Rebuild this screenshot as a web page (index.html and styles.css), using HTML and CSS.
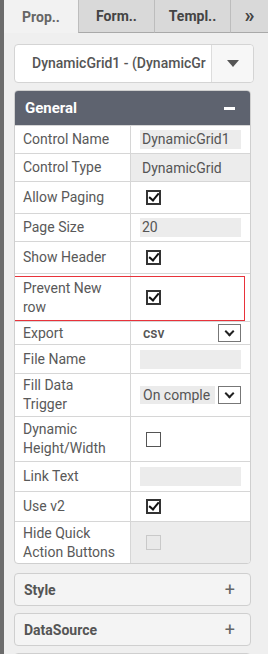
FILE: index.html
```html
<!DOCTYPE html>
<html lang="en">
<head>
  <meta charset="UTF-8">
  <title>Properties</title>
  <link rel="stylesheet" href="styles.css">
</head>
<body>
  <div class="shell">
    <div class="rail"></div>
    <div class="pane">
      <div class="tabs">
        <div class="tab active">Prop..</div>
        <div class="tab">Form..</div>
        <div class="tab">Templ..</div>
        <div class="tab more">&raquo;</div>
      </div>

      <div class="content">
        <div class="picker">
          <span class="picker-text">DynamicGrid1 - (DynamicGr</span>
          <span class="picker-btn">
            <svg width="12" height="7" viewBox="0 0 12 7"><path d="M0 0h12L6 7z" fill="#555"/></svg>
          </span>
        </div>

        <div class="section open">
          <div class="section-head">
            <span>General</span>
            <span class="minus"></span>
          </div>

          <div class="row h28">
            <div class="lbl">Control Name</div>
            <div class="val"><span class="field">DynamicGrid1</span></div>
          </div>
          <div class="row h28">
            <div class="lbl">Control Type</div>
            <div class="val grey">DynamicGrid</div>
          </div>
          <div class="row h32">
            <div class="lbl">Allow Paging</div>
            <div class="val"><span class="check on"></span></div>
          </div>
          <div class="row h28">
            <div class="lbl">Page Size</div>
            <div class="val"><span class="field">20</span></div>
          </div>
          <div class="row h32">
            <div class="lbl">Show Header</div>
            <div class="val"><span class="check on"></span></div>
          </div>
          <div class="row h48 marked">
            <div class="lbl">Prevent New<br>row</div>
            <div class="val"><span class="check on"></span></div>
          </div>
          <div class="row h23">
            <div class="lbl">Export</div>
            <div class="val"><span class="select plain">csv</span><span class="arrow"></span></div>
          </div>
          <div class="row h29">
            <div class="lbl">File Name</div>
            <div class="val"><span class="field"></span></div>
          </div>
          <div class="row h43">
            <div class="lbl">Fill Data<br>Trigger</div>
            <div class="val"><span class="select">On comple</span><span class="arrow"></span></div>
          </div>
          <div class="row h45">
            <div class="lbl">Dynamic<br>Height/Width</div>
            <div class="val"><span class="check"></span></div>
          </div>
          <div class="row h30">
            <div class="lbl">Link Text</div>
            <div class="val"><span class="field"></span></div>
          </div>
          <div class="row h30">
            <div class="lbl">Use v2</div>
            <div class="val"><span class="check on"></span></div>
          </div>
          <div class="row h43 last">
            <div class="lbl">Hide Quick<br>Action Buttons</div>
            <div class="val grey"><span class="check off"></span></div>
          </div>
        </div>

        <div class="section closed">
          <span>Style</span>
          <span class="plus">+</span>
        </div>
        <div class="section closed">
          <span>DataSource</span>
          <span class="plus">+</span>
        </div>
        <div class="section closed"></div>
      </div>
    </div>
  </div>
</body>
</html>
```

FILE: styles.css
```css
body {
  margin: 0;
  font-family: Roboto, "Liberation Sans", sans-serif;
  background: #efefef;
  color: #555;
  width: 268px;
  height: 654px;
  overflow: hidden;
}

.shell {
  display: flex;
  height: 654px;
}

.rail {
  width: 4px;
  background: #6c6c6c;
  flex-shrink: 0;
}

.pane {
  flex: 1;
  min-width: 0;
}

.tabs {
  display: flex;
  height: 33px;
}

.tab {
  display: flex;
  align-items: center;
  justify-content: center;
  width: 76px;
  background: #d9d9d9;
  border-left: 1px solid #bdbdbd;
  border-bottom: 1px solid #a9a9a9;
  font-weight: bold;
  font-size: 14px;
  color: #444;
  box-sizing: border-box;
}

.tab.active {
  width: 74px;
  background: #f2f2f2;
  color: #666;
  border-left: none;
  border-bottom: none;
}

.tab.more {
  flex: 1;
  width: auto;
  font-size: 20px;
  padding-bottom: 3px;
}

.content {
  padding: 11px 14px 0 10px;
}

.picker {
  display: flex;
  height: 39px;
  background: #fff;
  border: 1px solid #d4d4d4;
  border-radius: 4px;
  box-sizing: border-box;
}

.picker-text {
  width: 179px;
  padding-left: 17px;
  white-space: nowrap;
  line-height: 37px;
  font-size: 14px;
  font-weight: 500;
  color: #555;
}

.picker-btn {
  flex: 1;
  display: flex;
  align-items: center;
  justify-content: center;
  border-left: 1px solid #ddd;
  background: #f7f7f7;
  border-radius: 0 4px 4px 0;
}

.section {
  width: 237px;
  margin-top: 7px;
  border: 1px solid #cfcfcf;
  border-radius: 4px;
  box-sizing: border-box;
}

.section.open {
  background: #fff;
  overflow: hidden;
}

.section-head {
  display: flex;
  justify-content: space-between;
  align-items: center;
  height: 34px;
  padding: 0 15px 0 10px;
  background: #5e636f;
  color: #fff;
  font-weight: bold;
  font-size: 15px;
}

.minus {
  width: 11px;
  height: 3px;
  background: #fff;
}

.row {
  display: grid;
  grid-template-columns: 116px 1fr;
  border-top: 1px solid #d6d6d6;
  box-sizing: border-box;
  font-size: 14px;
}

.h23 { height: 23px; }
.h28 { height: 28px; }
.h29 { height: 29px; }
.h30 { height: 30px; }
.h32 { height: 32px; }
.h43 { height: 43px; }
.h45 { height: 45px; }
.h48 { height: 48px; }

.row.last { height: 42px; }

.row.marked {
  position: relative;
}

.row.marked::after {
  content: "";
  position: absolute;
  left: -3px;
  top: 2px;
  width: 233px;
  height: 45px;
  border: 1px solid #e8323a;
  box-sizing: border-box;
}

.lbl {
  display: flex;
  align-items: center;
  padding-left: 8px;
  border-right: 1px solid #d6d6d6;
  line-height: 19px;
  color: #595959;
}

.val {
  display: flex;
  align-items: center;
  padding: 0 9px 0 9px;
  color: #555;
  min-width: 0;
}

.val.grey {
  background: #ececec;
  padding-left: 11px;
}

.field {
  flex: 1;
  height: 19px;
  line-height: 19px;
  padding-left: 2px;
  background: #ececec;
}

.select {
  flex: 1;
  min-width: 0;
  height: 18px;
  line-height: 18px;
  padding-left: 3px;
  background: #ebebeb;
  white-space: nowrap;
  margin-right: 3px;
}

.select.plain {
  background: transparent;
  font-weight: 500;
}

.arrow {
  width: 23px;
  height: 18px;
  border: 1px solid #777;
  background: #fff;
  box-sizing: border-box;
  flex-shrink: 0;
  position: relative;
}

.arrow::after {
  content: "";
  position: absolute;
  left: 7px;
  top: 3px;
  width: 5px;
  height: 5px;
  border-right: 2px solid #222;
  border-bottom: 2px solid #222;
  transform: rotate(45deg);
}

.check {
  width: 15px;
  height: 15px;
  margin-left: 6px;
  border: 1px solid #555;
  background: #fff;
  box-sizing: border-box;
  position: relative;
}

.check.on {
  border: 2px solid #333;
}

.check.on::after {
  content: "";
  position: absolute;
  left: 3px;
  top: -1px;
  width: 4px;
  height: 8px;
  border-right: 2px solid #111;
  border-bottom: 2px solid #111;
  transform: rotate(40deg);
}

.check.off {
  border-color: #c9c9c9;
  background: #e9e9e9;
  margin-left: 4px;
}

.section.closed {
  display: flex;
  justify-content: space-between;
  align-items: center;
  height: 33px;
  padding: 0 15px 0 9px;
  background: #f4f4f4;
  font-weight: bold;
  font-size: 14px;
  color: #555;
}

.section.open + .section.closed {
  margin-top: 9px;
}

.plus {
  font-size: 18px;
  font-weight: normal;
  color: #666;
}
```
